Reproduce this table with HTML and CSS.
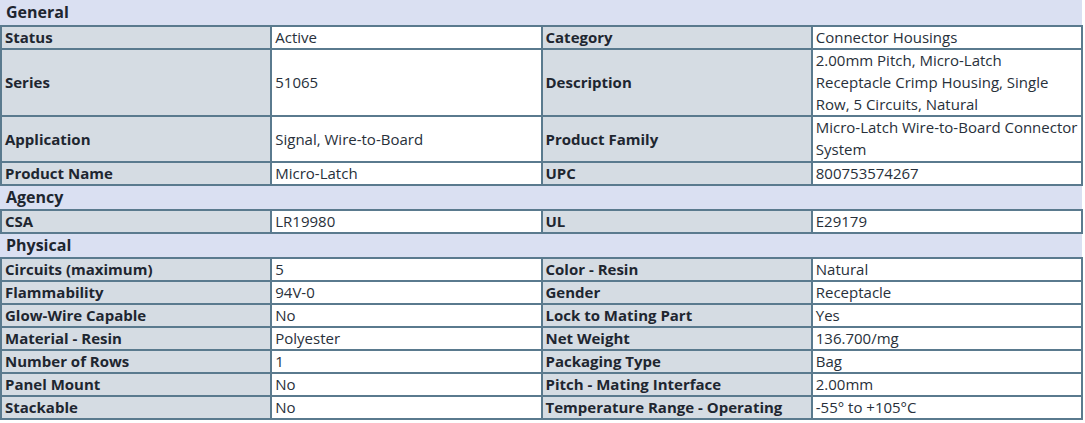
FILE: index.html
```html
<!DOCTYPE html>
<html>
<head>
<meta charset="utf-8">
<link rel="stylesheet" href="styles.css">
</head>
<body>
<div class="specs">
  <div class="section-head">General</div>
  <table class="spec-table">
    <tr><th>Status</th><td>Active</td><th>Category</th><td>Connector Housings</td></tr>
    <tr><th>Series</th><td>51065</td><th>Description</th><td class="wrap">2.00mm Pitch, Micro-Latch Receptacle Crimp Housing, Single Row, 5 Circuits, Natural</td></tr>
    <tr><th>Application</th><td>Signal, Wire-to-Board</td><th>Product Family</th><td class="wrap">Micro-Latch Wire-to-Board Connector System</td></tr>
    <tr><th>Product Name</th><td>Micro-Latch</td><th>UPC</th><td>800753574267</td></tr>
  </table>
  <div class="section-head">Agency</div>
  <table class="spec-table">
    <tr><th>CSA</th><td>LR19980</td><th>UL</th><td>E29179</td></tr>
  </table>
  <div class="section-head">Physical</div>
  <table class="spec-table">
    <tr><th>Circuits (maximum)</th><td>5</td><th>Color - Resin</th><td>Natural</td></tr>
    <tr><th>Flammability</th><td>94V-0</td><th>Gender</th><td>Receptacle</td></tr>
    <tr><th>Glow-Wire Capable</th><td>No</td><th>Lock to Mating Part</th><td>Yes</td></tr>
    <tr><th>Material - Resin</th><td>Polyester</td><th>Net Weight</th><td>136.700/mg</td></tr>
    <tr><th>Number of Rows</th><td>1</td><th>Packaging Type</th><td>Bag</td></tr>
    <tr><th>Panel Mount</th><td>No</td><th>Pitch - Mating Interface</th><td>2.00mm</td></tr>
    <tr><th>Stackable</th><td>No</td><th>Temperature Range - Operating</th><td>-55° to +105°C</td></tr>
  </table>
</div>
</body>
</html>
```

FILE: styles.css
```css
html, body {
  margin: 0;
  padding: 0;
  background: #ffffff;
}
body {
  font-family: "Open Sans", "Liberation Sans", sans-serif;
  font-size: 15px;
  color: #222a33;
}
.specs {
  width: 1083px;
}
.section-head {
  background: #dae0f2;
  font-weight: bold;
  font-size: 16px;
  line-height: 23px;
  padding: 0 0 0 6px;
  color: #1e2630;
  width: 1076px;
}
.specs > .section-head:first-child {
  line-height: 25px;
}
.spec-table {
  width: 1083px;
  border-collapse: collapse;
  table-layout: fixed;
  border: 2px solid #5a7a8e;
}
.spec-table th,
.spec-table td {
  border: 2px solid #5a7a8e;
  padding: 0 3px;
  line-height: 21px;
  vertical-align: middle;
  text-align: left;
  width: 25%;
}
.spec-table td.wrap {
  line-height: 21.8px;
}
.spec-table th {
  background: #d5dce3;
  font-weight: bold;
  color: #1e2630;
}
.spec-table td {
  background: #ffffff;
  font-weight: normal;
  color: #28303a;
}
```
